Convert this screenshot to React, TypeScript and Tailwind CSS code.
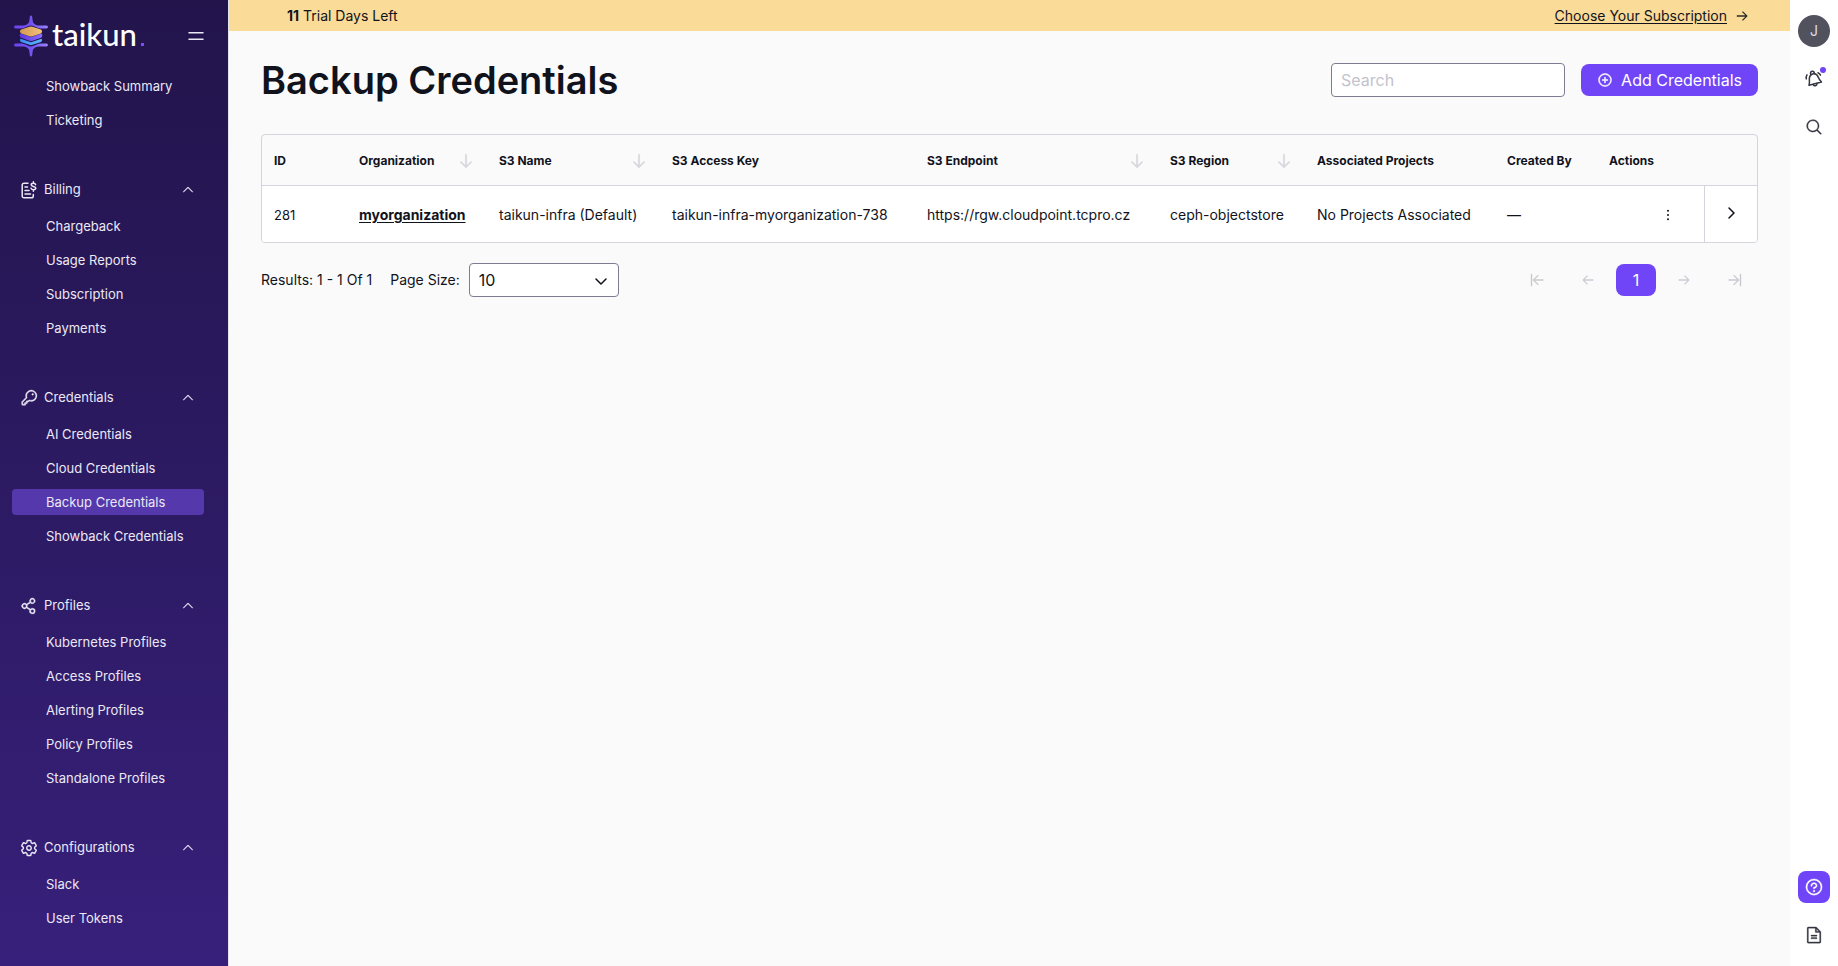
import React from 'react';
import {
  PiArrowLeft, PiArrowLineLeft, PiArrowLineRight, PiArrowRight, PiArrowDown, PiCaretUp,
  PiKey, PiMagnifyingGlass, PiPlusCircle, PiQuestion, PiShareNetwork, PiFileText, PiCaretDownBold, PiCaretRightBold,
  PiDotsThreeVerticalBold,
} from 'react-icons/pi';
import { IoSettingsOutline } from 'react-icons/io5';

function BillingIcon() {
  return (
    <svg className="size-[18px] shrink-0" viewBox="0 0 18 18" fill="none" stroke="currentColor" strokeWidth="1.500" strokeLinecap="round" strokeLinejoin="round" aria-hidden="true">
      <path d="M8 2.200H4A1.800 1.800 0 0 0 2.200 4v11A1.800 1.800 0 0 0 4 16.800h7.500a1.800 1.800 0 0 0 1.800-1.800v-1.500" />
      <path d="M5 6h2.500M5 9.500h4M5 13h5.500" />
      <path d="M15.600 3.700c-.2-.9-1-1.400-2.200-1.400-1.400 0-2.200.6-2.200 1.500 0 2.200 4.600 1 4.600 3.300 0 1-.9 1.600-2.400 1.600-1.400 0-2.200-.5-2.400-1.500M13.400.8v1.400M13.400 8.800v1.500" />
    </svg>
  );
}

function BellIcon() {
  return (
    <svg className="size-5" viewBox="0 0 20 20" fill="none" stroke="currentColor" strokeWidth="1.500" strokeLinecap="round" strokeLinejoin="round" aria-hidden="true">
      <path d="M6.900 5.600C6 3.900 6.700 2.400 8.200 2.200c1.300-.1 2.100.7 2.300 2.300" />
      <path d="M5 16.200C6 13.500 5.100 11.700 5.400 9.200 5.700 6.600 7.300 5.100 9.600 4.800c2.300-.2 3.900 1.300 4.700 3.500.7 2 1.500 3.200 3.200 4.800z" />
      <path d="M9.300 15.600c.8 2 3.800 1.400 3.700-1" />
      <path d="M2.300 9.900c-.4-1.500-.1-2.800.7-4M14 3.700c1.200.5 2 1.200 2.500 2.400" />
    </svg>
  );
}

function MenuIcon() {
  return (
    <svg className="h-3 w-4" viewBox="0 0 16 12" fill="none" stroke="currentColor" strokeWidth="1.500" strokeLinecap="round" aria-hidden="true">
      <path d="M1 2.800h14M1 9.200h14" />
    </svg>
  );
}

function LogoMark() {
  return (
    <svg className="h-[42px] w-[34px]" viewBox="0 0 34 42" aria-hidden="true">
      <defs>
        <linearGradient id="frame" x1="0" x2="1"><stop offset="0" stopColor="#6d45f5" /><stop offset=".5" stopColor="#7352f0" /><stop offset="1" stopColor="#9a83ff" /></linearGradient>
        <linearGradient id="gold" x1="0" x2="1"><stop offset="0" stopColor="#d39a52" /><stop offset="1" stopColor="#f3c07a" /></linearGradient>
        <linearGradient id="violet" x1="0" x2="1"><stop offset="0" stopColor="#5b35e0" /><stop offset="1" stopColor="#8a6cff" /></linearGradient>
        <linearGradient id="blue" x1="0" x2="1"><stop offset="0" stopColor="#3c8cf0" /><stop offset="1" stopColor="#5fb4ff" /></linearGradient>
      </defs>
      <path fill="url(#frame)" d="M17 .5c1.200 0 1.300 1.500 1.400 3 .3 4.700 1.800 6.500 6 7h8c2 0 2 3 0 3h-6c-3-.1-6.400-3-9.400-3s-6.400 2.900-9.400 3h-6c-2 0-2-3 0-3h8c4.200-.5 5.700-2.300 6-7 .1-1.500.2-3 1.400-3z" />
      <path fill="url(#frame)" d="M17 41.500c1.200 0 1.300-1.500 1.400-3 .3-4.700 1.800-6.500 6-7h8c2 0 2-3 0-3h-6c-3 .1-6.400 3-9.400 3s-6.400-2.900-9.400-3h-6c-2 0-2 3 0 3h8c4.200.5 5.700 2.300 6 7 .1 1.500.2 3 1.400 3z" />
      <path fill="url(#blue)" d="M6.500 23.800 17 27.300l10.500-3.500c.8.900.6 2.700-.5 3.100l-8.500 2.900q-1.500.5-3 0L7 26.900c-1.100-.4-1.300-2.200-.5-3.100z" />
      <path fill="url(#violet)" d="M6.200 18.600 17 22.100l10.800-3.500c.9 1.400.7 3.700-.8 4.200l-8.500 2.900q-1.500.5-3 0L7 22.800c-1.500-.5-1.700-2.800-.8-4.200z" />
      <path fill="url(#gold)" d="m15.500 11.700-8.400 2.900c-1.500.6-1.500 3.300 0 3.900l8.400 2.800q1.500.4 3 0l8.400-2.800c1.500-.6 1.500-3.300 0-3.900l-8.400-2.900q-1.500-.4-3 0z" />
    </svg>
  );
}

const groups = [
  { title: 'Billing', icon: <BillingIcon />, items: ['Chargeback', 'Usage Reports', 'Subscription', 'Payments'] },
  { title: 'Credentials', icon: <PiKey strokeWidth={6} className="size-[18px] shrink-0" />, items: ['AI Credentials', 'Cloud Credentials', 'Backup Credentials', 'Showback Credentials'] },
  { title: 'Profiles', icon: <PiShareNetwork strokeWidth={6} className="size-[18px] shrink-0" />, items: ['Kubernetes Profiles', 'Access Profiles', 'Alerting Profiles', 'Policy Profiles', 'Standalone Profiles'] },
  { title: 'Configurations', icon: <IoSettingsOutline className="size-[18px] shrink-0 [&_path]:[stroke-width:40px]" />, items: ['Slack', 'User Tokens'] },
];

function NavList({ items }: { items: string[] }) {
  return (
    <ul className="flex flex-col gap-2">
      {items.map((item) => (
        <li key={item}>
          <a
            href="#"
            aria-current={item === 'Backup Credentials' ? 'page' : undefined}
            className={`block rounded pl-[34px] leading-[26px] ${item === 'Backup Credentials' ? 'bg-[#5539ac]' : ''}`}
          >
            {item}
          </a>
        </li>
      ))}
    </ul>
  );
}

function Sidebar() {
  return (
    <aside className="flex w-[229px] shrink-0 flex-col border-r border-[#e4e4ea] bg-linear-to-b from-[#22144b] to-[#37207b] text-[13px] text-[#ebe8f5]">
      <div className="flex h-[73px] items-center justify-between pr-6 pb-px pl-[14px]">
        <a href="#" className="flex items-center gap-1 text-white" aria-label="taikun">
          <LogoMark />
          <span className="flex items-baseline gap-1 pb-1 font-[Lato,sans-serif] text-[31px] leading-9 font-medium">
            taikun
            <span className="size-[3px] bg-[#7a4dff]" />
          </span>
        </a>
        <button aria-label="Collapse menu"><MenuIcon /></button>
      </div>
      <nav className="flex flex-col gap-[41px] pr-6 pl-3">
        <NavList items={['Showback Summary', 'Ticketing']} />
        {groups.map((g) => (
          <section key={g.title} className="flex flex-col gap-[7px]">
            <button className="flex h-8 items-center gap-[6px] pr-[9px] pl-2 text-left">
              {g.icon}
              <span className="flex-1">{g.title}</span>
              <PiCaretUp strokeWidth={5} className="size-[14px]" />
            </button>
            <NavList items={g.items} />
          </section>
        ))}
      </nav>
    </aside>
  );
}

const columns = [
  { label: 'ID', width: 'w-[85px]', sort: false },
  { label: 'Organization', width: 'w-[140px]', sort: true },
  { label: 'S3 Name', width: 'w-[173px]', sort: true },
  { label: 'S3 Access Key', width: 'w-[255px]', sort: false },
  { label: 'S3 Endpoint', width: 'w-[243px]', sort: true },
  { label: 'S3 Region', width: 'w-[147px]', sort: true },
  { label: 'Associated Projects', width: 'w-[190px]', sort: false },
  { label: 'Created By', width: 'w-[102px]', sort: false },
  { label: 'Actions', width: 'w-[107px]', sort: false },
];

function CredentialsTable() {
  return (
    <div className="overflow-hidden rounded border border-[#d4d4dc]">
      <table className="w-full table-fixed border-separate border-spacing-0 text-left text-sm whitespace-nowrap">
        <thead>
          <tr className="h-[51px] text-xs">
            {columns.map((c) => (
              <th key={c.label} scope="col" className={`border-b border-[#d4d4dc] px-3 pt-[2px] font-bold ${c.width}`}>
                <div className="flex items-center justify-between">
                  {c.label}
                  {c.sort && <button aria-label={`Sort by ${c.label}`} className="text-[#d4d4dc]"><PiArrowDown strokeWidth={8} className="size-[18px]" /></button>}
                </div>
              </th>
            ))}
            <td className="w-[54px] border-b border-[#d4d4dc]" />
          </tr>
        </thead>
        <tbody>
          <tr className="h-[56px] bg-white">
            <td className="px-3 pt-[2px] text-[13px]">281</td>
            <td className="px-3 pt-[2px]"><a href="#" className="font-bold underline underline-offset-2">myorganization</a></td>
            <td className="px-3 pt-[2px]">taikun-infra (Default)</td>
            <td className="px-3 pt-[2px]">taikun-infra-myorganization-738</td>
            <td className="px-3 pt-[2px]">https://rgw.cloudpoint.tcpro.cz</td>
            <td className="px-3 pt-[2px]">ceph-objectstore</td>
            <td className="px-3 pt-[2px]">No Projects Associated</td>
            <td className="px-3 pt-[2px]">—</td>
            <td className="pr-7 text-right"><button className="align-middle" aria-label="Row actions"><PiDotsThreeVerticalBold className="size-4" /></button></td>
            <td className="border-l border-[#d4d4dc] pr-[2px] pb-[4px] text-center"><button className="align-middle" aria-label="Expand row"><PiCaretRightBold className="size-4" /></button></td>
          </tr>
        </tbody>
      </table>
    </div>
  );
}

export default function App() {
  return (
    <div className="flex min-h-screen bg-[#fafafa] font-[Inter,sans-serif] text-[#11131c]">
      <Sidebar />
      <div className="flex min-w-0 flex-1 flex-col">
        <div className="flex h-[31px] items-center justify-between bg-[#fadb98] pr-[41px] pl-[58px] text-sm">
          <p><strong>11</strong> Trial Days Left</p>
          <a href="#" className="flex items-center gap-2"><span className="underline underline-offset-2">Choose Your Subscription</span><PiArrowRight strokeWidth={6} className="size-[14px]" /></a>
        </div>
        <main className="px-8 pt-6">
          <header className="flex items-center justify-between pb-[29px]">
            <h1 className="text-[38px] leading-[50px] font-semibold">Backup Credentials</h1>
            <div className="flex items-center gap-4">
              <input type="search" aria-label="Search" placeholder="Search" className="h-[34px] w-[234px] rounded border border-[#7d7d92] bg-white px-[9px] pb-px text-base placeholder:text-[#c3c3cc]" />
              <button className="flex h-8 items-center gap-2 rounded-lg bg-[#6f45f7] px-4 text-base text-white"><PiPlusCircle strokeWidth={8} className="size-4" />Add Credentials</button>
            </div>
          </header>
          <CredentialsTable />
          <footer className="mt-5 flex items-center justify-between text-sm">
            <div className="flex items-center">
              <p className="mr-[18px]">Results: 1 - 1 Of 1</p>
              <label htmlFor="page-size" className="mr-[9px]">Page Size:</label>
              <div className="relative">
                <select id="page-size" className="h-[34px] w-[150px] appearance-none rounded border border-[#7d7d92] bg-white px-[9px] text-base"><option>10</option></select>
                <PiCaretDownBold className="pointer-events-none absolute top-[10px] right-[10px] size-4" />
              </div>
            </div>
            <nav className="flex items-center gap-2 text-[#c6c6cd]" aria-label="Pagination">
              <button className="flex h-8 w-[46px] items-center justify-center" aria-label="First page"><PiArrowLineLeft strokeWidth={6} className="size-4" /></button>
              <button className="flex h-8 w-10 items-center justify-center" aria-label="Previous page"><PiArrowLeft strokeWidth={6} className="size-[14px]" /></button>
              <button className="h-8 w-10 rounded-lg bg-[#6f45f7] text-base text-white">1</button>
              <button className="flex h-8 w-10 items-center justify-center" aria-label="Next page"><PiArrowRight strokeWidth={6} className="size-[14px]" /></button>
              <button className="flex h-8 w-[46px] items-center justify-center" aria-label="Last page"><PiArrowLineRight strokeWidth={6} className="size-4" /></button>
            </nav>
          </footer>
        </main>
      </div>
      <aside className="flex w-12 shrink-0 flex-col items-center bg-white py-[15px] text-[#343541]">
        <button className="size-8 rounded-full bg-[#52525f] text-sm text-[#dcdce4]">J</button>
        <button className="relative mt-4 flex size-8 items-center justify-center" aria-label="Notifications"><BellIcon /><span className="absolute top-1 right-1 size-[6px] rounded-full bg-[#6f45f7]" /></button>
        <button className="mt-4 flex size-8 items-center justify-center" aria-label="Search"><PiMagnifyingGlass strokeWidth={5} className="size-[18px]" /></button>
        <button className="mt-auto flex size-8 items-center justify-center rounded-lg bg-[#6f45f7] text-white" aria-label="Help"><PiQuestion strokeWidth={5} className="size-5" /></button>
        <button className="mt-4 flex size-8 items-center justify-center" aria-label="Documentation"><PiFileText strokeWidth={4} className="size-5" /></button>
      </aside>
    </div>
  );
}
